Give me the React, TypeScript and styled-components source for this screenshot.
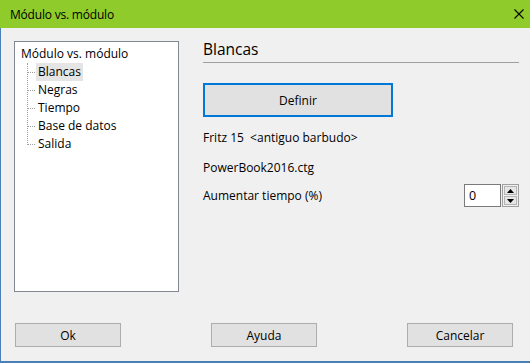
import React, { useState } from "react";
import styled, { createGlobalStyle } from "styled-components";

const GlobalStyle = createGlobalStyle`
  html, body {
    margin: 0;
    padding: 0;
    background: #f0f0f0;
  }
  body {
    font-family: "Open Sans", "Noto Sans", sans-serif;
    font-size: 12px;
    color: #000;
  }
`;

const Window = styled.div`
  width: 530px;
  height: 363px;
  display: flex;
  flex-direction: column;
  box-sizing: border-box;
  overflow: hidden;
`;

const TitleBar = styled.div`
  height: 28px;
  flex: none;
  background: #8fcb2a;
  display: flex;
  align-items: center;
  justify-content: space-between;
  padding: 0 5px 0 10px;
`;

const Title = styled.span`
  font-size: 12px;
  letter-spacing: -0.2px;
`;

const CloseIcon = styled.svg`
  width: 10px;
  height: 10px;
  margin-right: 1px;
`;

const Body = styled.div`
  flex: 1;
  display: flex;
  flex-direction: column;
  border-left: 1px solid #4a80b8;
  border-bottom: 2px solid #4a80b8;
  padding: 13px 11px 14px 13px;
`;

const Main = styled.div`
  display: flex;
  gap: 24px;
`;

const TreePanel = styled.div`
  width: 165px;
  height: 251px;
  box-sizing: border-box;
  background: #fff;
  border: 1px solid #828790;
  padding: 3px 0 0 6px;
`;

const TreeRoot = styled.div`
  height: 18px;
  line-height: 18px;
`;

const TreeChildren = styled.div`
  position: relative;
  margin-left: 6px;
`;

const Guide = styled.div`
  position: absolute;
  left: 0;
  top: 0;
  height: 82px;
  border-left: 1px dotted #a0a0a0;
`;

const TreeRow = styled.div`
  display: flex;
  align-items: center;
  height: 18px;
`;

const Branch = styled.span`
  width: 8px;
  border-top: 1px dotted #a0a0a0;
  margin-right: 1px;
`;

const Label = styled.span<{ $selected?: boolean }>`
  line-height: 18px;
  padding: 0 2px 0 2px;
  background: ${(p) => (p.$selected ? "#e5e5e5" : "transparent")};
`;

const Pane = styled.div`
  flex: 1;
  display: flex;
  flex-direction: column;
`;

const Heading = styled.div`
  font-size: 15.5px;
  line-height: 20px;
  padding-bottom: 3px;
  border-bottom: 1px solid #a0a0a0;
  margin-top: -2px;
`;

const BigButton = styled.button<{ $focused?: boolean }>`
  width: 190px;
  height: 34px;
  margin-top: 20px;
  background: #e1e1e1;
  border: ${(p) => (p.$focused ? "2px solid #0078d7" : "1px solid #adadad")};
  font: inherit;
  padding: 0;
`;

const InfoLine = styled.div`
  height: 18px;
  line-height: 18px;
  white-space: pre;
`;

const InfoStack = styled.div`
  display: flex;
  flex-direction: column;
  gap: 12px;
  margin-top: 12px;
`;

const SpinRow = styled.div`
  display: flex;
  align-items: center;
  justify-content: space-between;
  margin-top: -5px;
`;

const Spin = styled.div`
  display: flex;
  height: 23px;
  gap: 1px;
`;

const SpinInput = styled.input`
  width: 37px;
  box-sizing: border-box;
  height: 23px;
  border: 1px solid #7a7a7a;
  padding: 0 4px;
  font: inherit;
  font-size: 12.5px;
  outline: none;
  background: #fff;
`;

const SpinButtons = styled.div`
  width: 17px;
  box-sizing: border-box;
  display: flex;
  flex-direction: column;
  gap: 1px;
  padding: 1px;
  border: 1px solid #a0a0a0;
  background: #f0f0f0;
`;

const SpinBtn = styled.div`
  flex: 1;
  background: #e6e6e6;
  border: 1px solid #b4b4b4;
  display: flex;
  align-items: center;
  justify-content: center;
`;

const Footer = styled.div`
  margin-top: auto;
  display: flex;
  justify-content: space-between;
  padding: 0 6px 0 1px;
`;

const DialogButton = styled.button`
  width: 106px;
  height: 24px;
  background: #e1e1e1;
  border: 1px solid #adadad;
  font: inherit;
  padding: 0;
`;

const Arrow = ({ up }: { up?: boolean }) => (
  <svg width="7" height="4" viewBox="0 0 7 4">
    <path d={up ? "M0 4 L3.5 0 L7 4 Z" : "M0 0 L3.5 4 L7 0 Z"} fill="#000" />
  </svg>
);

const items = ["Blancas", "Negras", "Tiempo", "Base de datos", "Salida"];

const App = () => {
  const [value, setValue] = useState("0");

  return (
    <>
      <GlobalStyle />
      <Window>
        <TitleBar>
          <Title>Módulo vs. módulo</Title>
          <CloseIcon viewBox="0 0 10 10">
            <path d="M0.5 0.5 L9.5 9.5 M9.5 0.5 L0.5 9.5" stroke="#000" strokeWidth="1.1" />
          </CloseIcon>
        </TitleBar>
        <Body>
          <Main>
            <TreePanel>
              <TreeRoot>Módulo vs. módulo</TreeRoot>
              <TreeChildren>
                <Guide />
                {items.map((item, i) => (
                  <TreeRow key={item}>
                    <Branch />
                    <Label $selected={i === 0}>{item}</Label>
                  </TreeRow>
                ))}
              </TreeChildren>
            </TreePanel>
            <Pane>
              <Heading>Blancas</Heading>
              <BigButton $focused>Definir</BigButton>
              <InfoStack>
                <InfoLine>Fritz 15  &lt;antiguo barbudo&gt;</InfoLine>
                <InfoLine>PowerBook2016.ctg</InfoLine>
                <SpinRow>
                  <InfoLine>Aumentar tiempo (%)</InfoLine>
                  <Spin>
                    <SpinInput value={value} onChange={(e) => setValue(e.target.value)} />
                    <SpinButtons>
                      <SpinBtn>
                        <Arrow up />
                      </SpinBtn>
                      <SpinBtn>
                        <Arrow />
                      </SpinBtn>
                    </SpinButtons>
                  </Spin>
                </SpinRow>
              </InfoStack>
            </Pane>
          </Main>
          <Footer>
            <DialogButton>Ok</DialogButton>
            <DialogButton>Ayuda</DialogButton>
            <DialogButton>Cancelar</DialogButton>
          </Footer>
        </Body>
      </Window>
    </>
  );
};

export default App;
